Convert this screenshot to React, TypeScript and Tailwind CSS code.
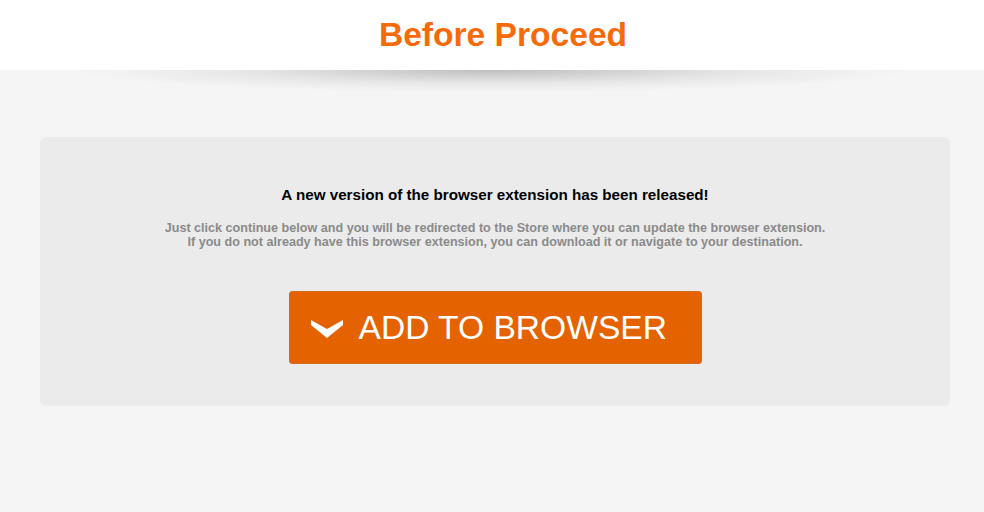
import { useState } from "react";

function Chevron() {
  return (
    <svg width="34" height="22" viewBox="0 0 34 22" className="shrink-0">
      <path d="M1 3 L17 12 L33 3 L33 8 L17 21 L1 8 Z" fill="#ffffff" />
    </svg>
  );
}

export default function App() {
  const [clicked, setClicked] = useState(false);

  return (
    <div className="min-h-[512px] bg-[#f5f5f5] font-['Liberation_Sans',Arial,sans-serif]">
      {/* Header */}
      <header className="relative bg-white h-[70px] flex items-center justify-center pl-[22px]">
        <h1 className="text-[33.6px] font-bold text-[#f76a0a] leading-none">
          Before Proceed
        </h1>
        <div className="absolute left-[70px] right-[70px] top-[70px] h-[22px] bg-[radial-gradient(ellipse_50%_100%_at_50%_0%,rgba(0,0,0,0.22),rgba(0,0,0,0.06)_60%,rgba(0,0,0,0)_100%)]" />
      </header>

      {/* Card */}
      <div className="pl-10 pr-[34px] pt-[67px]">
        <div className="bg-[#ebebeb] rounded-md h-[269px] flex flex-col items-center pt-[49px]">
          <p className="text-[15.2px] font-bold text-black leading-[18px]">
            A new version of the browser extension has been released!
          </p>
          <div className="mt-[17px] text-[12.6px] font-bold text-[#8a8a8a] leading-[14px] text-center">
            <p>
              Just click continue below and you will be redirected to the Store
              where you can update the browser extension.
            </p>
            <p>
              If you do not already have this browser extension, you can
              download it or navigate to your destination.
            </p>
          </div>
          <button
            onClick={() => setClicked(!clicked)}
            className="mt-[42px] w-[413px] h-[73px] bg-[#e56200] border border-[#d3701f] rounded-[3px] flex items-center pl-[20px] gap-[15px] text-white text-[33.6px] leading-none"
          >
            <Chevron />
            <span>ADD TO BROWSER</span>
          </button>
        </div>
      </div>
    </div>
  );
}
